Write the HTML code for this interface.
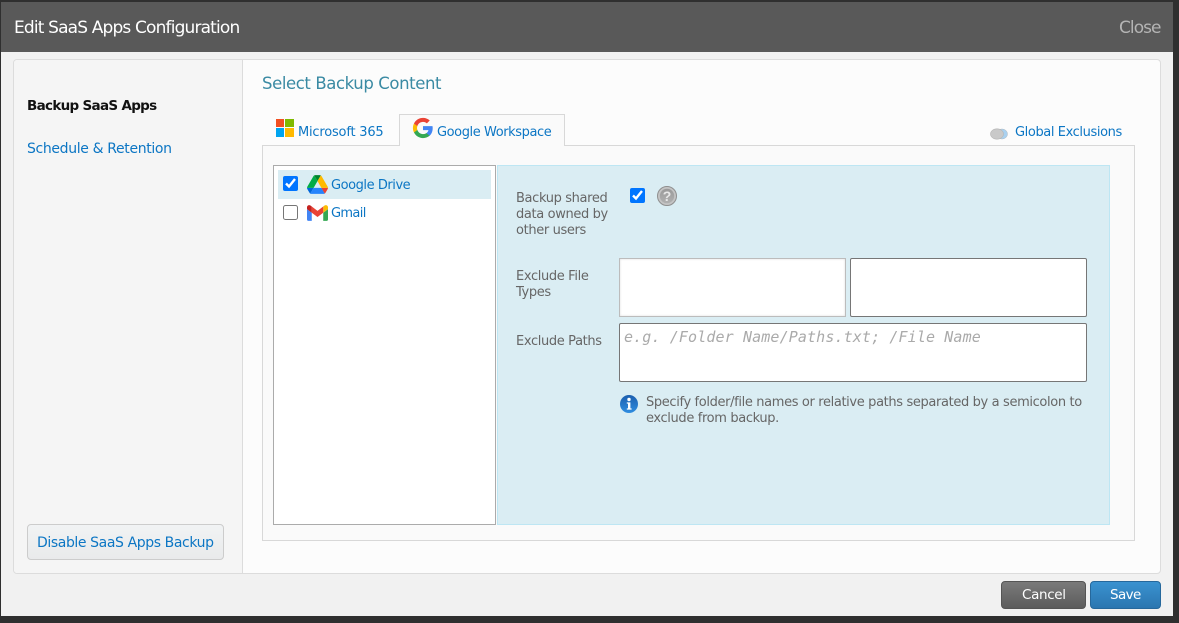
<!DOCTYPE html>
<html><head><meta charset="utf-8"><title>Edit SaaS Apps Configuration</title>
<style>
html,body{margin:0;padding:0;width:1179px;height:623px;overflow:hidden;background:#2f2f2f}
body{position:relative;font-family:"DejaVu Sans","Liberation Sans",sans-serif;font-size:13px;letter-spacing:-.36px;color:#666}
div,span,a,input,svg,textarea{position:absolute;box-sizing:border-box}
.t{white-space:nowrap;line-height:16px}
.l{color:#0c76c4}
.g{color:#666}
</style></head><body>
<div style="left:1px;top:2px;width:1172px;height:614px;background:#f1f1f1"></div>
<div style="left:1px;top:2px;width:1172px;height:50px;background:#595959"></div>
<span class="t" style="left:14px;top:20px;font-size:17px;letter-spacing:-.84px;color:#fff">Edit SaaS Apps Configuration</span>
<span class="t" style="left:1119px;top:20px;font-size:17px;letter-spacing:-.95px;color:#b4b4b4">Close</span>

<div style="left:13px;top:59px;width:1148px;height:515px;background:#fcfcfc;border:1px solid #dcdcdc;border-radius:4px"></div>
<div style="left:14px;top:60px;width:229px;height:513px;background:#f5f5f5;border-right:1px solid #dcdcdc;border-radius:3px 0 0 3px"></div>
<span class="t" style="left:27px;top:98px;font-weight:bold;color:#111;letter-spacing:-.69px;font-size:13.5px">Backup SaaS Apps</span>
<span class="t l" style="left:27px;top:141px;font-size:14px;letter-spacing:-.35px">Schedule &amp; Retention</span>
<div style="left:27px;top:524px;width:197px;height:36px;border:1px solid #ccc;border-radius:4px;background:linear-gradient(#f1f3f4,#e9eaeb)"></div>
<span class="t l" style="left:37px;top:535px;font-size:14px;letter-spacing:-.4px">Disable SaaS Apps Backup</span>

<span class="t" style="left:262px;top:76px;font-size:16.5px;letter-spacing:-.4px;color:#3a8aa3">Select Backup Content</span>

<div style="left:262px;top:145px;width:873px;height:396px;background:#fafafa;border:1px solid #d8d8d8"></div>
<div style="left:399px;top:114px;width:166px;height:32px;background:#fafafa;border:1px solid #d8d8d8;border-bottom:0"></div>

<div style="left:276px;top:119px;width:8px;height:8px;background:#f25022"></div>
<div style="left:285px;top:119px;width:9px;height:8px;background:#7fba00"></div>
<div style="left:276px;top:128px;width:8px;height:9px;background:#00a4ef"></div>
<div style="left:285px;top:128px;width:9px;height:9px;background:#ffb900"></div>
<span class="t l" style="left:298px;top:125px;letter-spacing:-.2px">Microsoft 365</span>

<svg style="left:412px;top:117px" width="22" height="22" viewBox="0 0 24 24">
<path fill="#4285F4" d="M22.56 12.25c0-.78-.07-1.53-.2-2.25H12v4.26h5.92c-.26 1.37-1.04 2.53-2.21 3.31v2.77h3.57c2.08-1.92 3.28-4.74 3.28-8.09z"/>
<path fill="#34A853" d="M12 23c2.97 0 5.46-.98 7.28-2.66l-3.57-2.77c-.98.66-2.23 1.06-3.71 1.06-2.86 0-5.29-1.93-6.16-4.53H2.18v2.84C3.99 20.53 7.7 23 12 23z"/>
<path fill="#FBBC05" d="M5.84 14.09c-.22-.66-.35-1.36-.35-2.09s.13-1.43.35-2.09V7.07H2.18C1.43 8.55 1 10.22 1 12s.43 3.45 1.18 4.93l2.85-2.22.81-.62z"/>
<path fill="#EA4335" d="M12 5.38c1.62 0 3.06.56 4.21 1.64l3.15-3.15C17.45 2.09 14.97 1 12 1 7.7 1 3.99 3.47 2.18 7.07l3.66 2.84c.87-2.6 3.3-4.53 6.16-4.53z"/>
</svg>
<span class="t l" style="left:437px;top:125px;letter-spacing:-.42px">Google Workspace</span>

<svg style="left:990px;top:127px" width="18" height="13" viewBox="0 0 18 13">
<ellipse cx="12" cy="7" rx="5.5" ry="5" fill="#a9d1f0" stroke="#b0b8c0" stroke-width=".5"/>
<ellipse cx="7" cy="7" rx="6.5" ry="5.2" fill="#c9c9c9" stroke="#b5b5b5" stroke-width=".6"/>
</svg>
<span class="t l" style="left:1015px;top:125px;letter-spacing:-.4px">Global Exclusions</span>

<div style="left:273px;top:165px;width:223px;height:360px;background:#fff;border:1px solid #ababab"></div>
<div style="left:278px;top:170px;width:213px;height:29px;background:#daedf3"></div>
<input type="checkbox" checked style="left:283px;top:176px;width:15px;height:15px;margin:0">
<svg style="left:307px;top:175px" width="21" height="19" viewBox="0 0 87.3 78">
<path d="M6.6 66.85l3.85 6.65c.8 1.4 1.95 2.5 3.3 3.3l13.75-23.8H0c0 1.55.4 3.1 1.2 4.5z" fill="#0066da"/>
<path d="M43.65 25L29.9 1.2c-1.35.8-2.5 1.9-3.3 3.3L1.2 48.5c-.8 1.4-1.2 2.95-1.2 4.5h27.5z" fill="#00ac47"/>
<path d="M73.55 76.8c1.35-.8 2.5-1.9 3.3-3.3l1.6-2.75 7.65-13.25c.8-1.4 1.2-2.95 1.2-4.5H59.8l5.85 11.5z" fill="#ea4335"/>
<path d="M43.65 25L57.4 1.2C56.05.4 54.5 0 52.9 0H34.4c-1.6 0-3.15.45-4.5 1.2z" fill="#00832d"/>
<path d="M59.8 53H27.5L13.75 76.8c1.35.8 2.9 1.2 4.5 1.2h50.8c1.6 0 3.15-.45 4.5-1.2z" fill="#2684fc"/>
<path d="M73.4 26.5L60.7 4.5c-.8-1.4-1.95-2.5-3.3-3.3L43.65 25 59.8 53h27.45c0-1.55-.4-3.1-1.2-4.5z" fill="#ffba00"/>
</svg>
<span class="t l" style="left:331px;top:178px;letter-spacing:-.45px">Google Drive</span>
<input type="checkbox" style="left:283px;top:205px;width:15px;height:15px;margin:0">
<svg style="left:307px;top:205px" width="21" height="16" viewBox="52 42 88 66">
<path fill="#4285f4" d="M58 108h14V74L52 59v43c0 3.32 2.69 6 6 6"/>
<path fill="#34a853" d="M120 108h14c3.32 0 6-2.69 6-6V59l-20 15"/>
<path fill="#fbbc04" d="M120 48v26l20-15v-8c0-7.42-8.47-11.65-14.4-7.2"/>
<path fill="#ea4335" d="M72 74V48l24 18 24-18v26L96 92"/>
<path fill="#c5221f" d="M52 51v8l20 15V48l-5.6-4.2c-5.94-4.45-14.4-.22-14.4 7.2"/>
</svg>
<span class="t l" style="left:331px;top:206px;letter-spacing:-.65px">Gmail</span>

<div style="left:497px;top:165px;width:613px;height:360px;background:#daedf3;border:1px solid #bde6f3"></div>
<span class="t g" style="left:516px;top:191px">Backup shared</span>
<span class="t g" style="left:516px;top:207px">data owned by</span>
<span class="t g" style="left:516px;top:223px">other users</span>
<input type="checkbox" checked style="left:630px;top:188px;width:15px;height:15px;margin:0">
<svg style="left:657px;top:186px" width="20" height="20" viewBox="0 0 20 20">
<defs><linearGradient id="q" x1="0" y1="0" x2="0" y2="1"><stop offset="0" stop-color="#9a9a9a"/><stop offset="1" stop-color="#b0b0b0"/></linearGradient></defs>
<circle cx="10" cy="10" r="9.5" fill="#c4c4c4" stroke="#8f8f8f"/><circle cx="10" cy="10" r="7.2" fill="url(#q)"/>
<text x="10" y="15" font-family="Liberation Sans" font-size="14" font-weight="bold" fill="#e8e8e8" text-anchor="middle" letter-spacing="0">?</text>
</svg>

<span class="t g" style="left:516px;top:269px">Exclude File</span>
<span class="t g" style="left:516px;top:285px">Types</span>
<div style="left:619px;top:258px;width:227px;height:59px;background:#fff;border:1px solid #bcbcbc;box-shadow:inset 0 0 2px #dcdcdc"></div>
<div style="left:850px;top:258px;width:237px;height:59px;background:#fff;border:1px solid #767676;border-radius:2px"></div>
<span class="t g" style="left:516px;top:334px">Exclude Paths</span>
<div style="left:619px;top:323px;width:468px;height:59px;background:#fff;border:1px solid #767676;border-radius:2px"></div>
<span class="t" style="left:624px;top:329px;font-family:'DejaVu Sans Mono','Liberation Mono',monospace;font-style:italic;font-size:15px;letter-spacing:.12px;color:#aaa">e.g. /Folder Name/Paths.txt; /File Name</span>

<svg style="left:620px;top:395px" width="18" height="18" viewBox="0 0 18 18">
<defs><linearGradient id="i" x1="0" y1="0" x2="0" y2="1"><stop offset="0" stop-color="#1c5fae"/><stop offset="1" stop-color="#2f8de0"/></linearGradient></defs>
<circle cx="9" cy="9" r="9" fill="url(#i)"/><circle cx="9" cy="4.5" r="1.7" fill="#fff"/><path d="M6.8 7.4h3.6v6h1.2v1.2H6.8v-1.2H8V8.6H6.8z" fill="#fff"/>
</svg>
<span class="t g" style="left:646px;top:395px">Specify folder/file names or relative paths separated by a semicolon to</span>
<span class="t g" style="left:646px;top:411px">exclude from backup.</span>

<div style="left:1001px;top:581px;width:85px;height:28px;border:1px solid #555;border-radius:4px;background:linear-gradient(#7a7a7a,#5c5c5c)"></div>
<span class="t" style="left:1022px;top:587px;color:#fff;font-size:13.5px;letter-spacing:-.35px">Cancel</span>
<div style="left:1090px;top:581px;width:71px;height:28px;border:1px solid #26689c;border-radius:4px;background:linear-gradient(#3a92d0,#2b76b0)"></div>
<span class="t" style="left:1110px;top:587px;color:#fff;font-size:13.5px;letter-spacing:-.6px">Save</span>
</body></html>
